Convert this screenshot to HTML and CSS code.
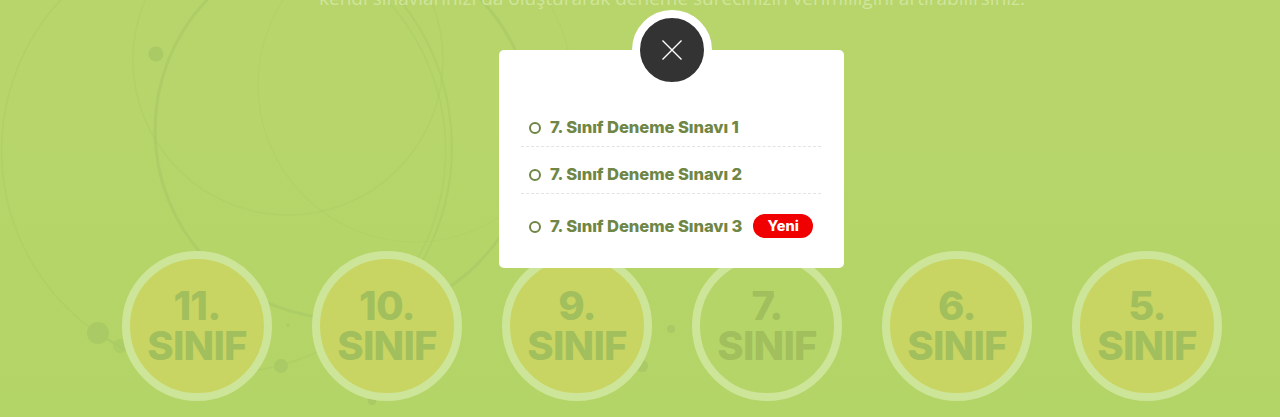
FILE: index.html
```html
<!DOCTYPE html>
<html lang="tr">
<head>
<meta charset="utf-8">
<title>Deneme Sınavları</title>
<link rel="stylesheet" href="styles.css">
</head>
<body>
<svg class="bg-art" viewBox="0 0 1280 417" aria-hidden="true">
  <g fill="none" stroke="#a9ca65">
    <circle cx="223.6" cy="150.6" r="222" stroke-width="1.5" opacity=".45"/>
    <circle cx="344" cy="130" r="189" stroke-width="3" opacity=".65"/>
    <circle cx="415" cy="85" r="157" stroke-width="1.2" opacity=".3"/>
    <circle cx="288" cy="60" r="155" stroke-width="1.5" opacity=".4"/>
    <path d="M400 0A235 235 0 0 1 423 260" stroke-width="2" opacity=".55"/>
    <path d="M98 333L122 348" stroke-width="1.5" opacity=".7"/>
  </g>
  <g fill="#a9ca65">
    <circle cx="156" cy="54" r="7.5"/>
    <circle cx="98" cy="333" r="11"/>
    <circle cx="120" cy="346" r="7" opacity=".7"/>
    <circle cx="281" cy="366" r="7"/>
    <circle cx="372" cy="401" r="4"/>
    <circle cx="671" cy="329" r="4"/>
    <circle cx="642" cy="366" r="6"/>
    <circle cx="288" cy="325" r="1.5"/>
  </g>
</svg>
<main class="page">
  <p class="lead">kendi sınavlarınızı da oluşturarak deneme sürecinizin verimliliğini artırabilirsiniz.</p>
  <ul class="grades">
    <li class="grade">11.<br>SINIF</li>
    <li class="grade">10.<br>SINIF</li>
    <li class="grade">9.<br>SINIF</li>
    <li class="grade grade-plain">7.<br>SINIF</li>
    <li class="grade">6.<br>SINIF</li>
    <li class="grade">5.<br>SINIF</li>
  </ul>
  <div class="overlay">
    <section class="modal">
      <button class="close" type="button" aria-label="Kapat">
        <svg class="close-icon" viewBox="0 0 20 20"><path d="M.5.5l19 19M19.5.5l-19 19"/></svg>
      </button>
      <ul class="exam-list">
        <li class="exam"><span class="dot"></span><span>7. Sınıf Deneme Sınavı 1</span></li>
        <li class="exam"><span class="dot"></span><span>7. Sınıf Deneme Sınavı 2</span></li>
        <li class="exam exam-last"><span class="dot"></span><span>7. Sınıf Deneme Sınavı 3</span><span class="badge">Yeni</span></li>
      </ul>
    </section>
  </div>
</main>
</body>
</html>
```
FILE: styles.css
```css
* { box-sizing: border-box; }
body {
  margin: 0;
  height: 417px;
  overflow: hidden;
  position: relative;
  background: linear-gradient(180deg, #b7d56b 0%, #b6d569 60%, #b3d466 100%);
  font-family: Inter, "Liberation Sans", sans-serif;
}
.bg-art {
  position: absolute;
  inset: 0;
  width: 1280px;
  height: 417px;
}
.page {
  position: relative;
  display: flow-root;
  width: 1100px;
  height: 417px;
  margin-left: 122px;
}
.lead {
  margin: -14px 0 0;
  height: 24px;
  line-height: 24px;
  font-family: "Open Sans", sans-serif;
  font-size: 19px;
  color: #d0e59b;
  text-align: center;
  white-space: nowrap;
}
.grades {
  list-style: none;
  margin: 241px 0 0;
  padding: 0;
  display: flex;
  gap: 40px;
}
.grade {
  width: 150px;
  height: 150px;
  border-radius: 50%;
  border: 8px solid #cde599;
  background: #c9d562;
  padding-top: 27px;
  color: #a2bf5d;
  font-size: 40px;
  font-weight: 800;
  line-height: 40px;
  letter-spacing: -.8px;
  text-align: center;
}
.grade-plain { background: #b5d568; }
.overlay {
  position: absolute;
  inset: 0;
  display: flex;
  justify-content: center;
  align-items: flex-start;
  padding-top: 50px;
}
.modal {
  position: relative;
  width: 345px;
  height: 218px;
  margin-left: -1px;
  padding: 50px 23px 0 22px;
  background: #fff;
  border-radius: 5px;
}
.close {
  position: absolute;
  left: 50%;
  top: -40px;
  width: 80px;
  height: 80px;
  margin-left: -40px;
  padding: 0;
  border: 8px solid #fff;
  border-radius: 50%;
  background: #333;
  display: flex;
  align-items: center;
  justify-content: center;
}
.close-icon {
  width: 20px;
  height: 20px;
  fill: none;
  stroke: #fff;
  stroke-width: 1.4;
}
.exam-list {
  list-style: none;
  margin: 0;
  padding: 0;
}
.exam {
  display: flex;
  align-items: center;
  gap: 9px;
  height: 47px;
  padding: 8px 8px 0;
  border-bottom: 1px dashed #e3e3e3;
  color: #6f8645;
  font-size: 16.6px;
  font-weight: 800;
  letter-spacing: -.08px;
  white-space: nowrap;
}
.exam-last {
  height: 44px;
  padding-top: 19px;
  border-bottom: 0;
}
.dot {
  flex: none;
  width: 12px;
  height: 12px;
  margin-top: 2px;
  border: 2px solid #6f8645;
  border-radius: 50%;
}
.badge {
  margin: 0 0 0 2px;
  width: 61px;
  height: 24px;
  border-radius: 12px;
  background: #f00000;
  color: #fff;
  font-size: 14.5px;
  font-weight: 800;
  line-height: 24px;
  letter-spacing: 0;
  text-align: center;
}
```
